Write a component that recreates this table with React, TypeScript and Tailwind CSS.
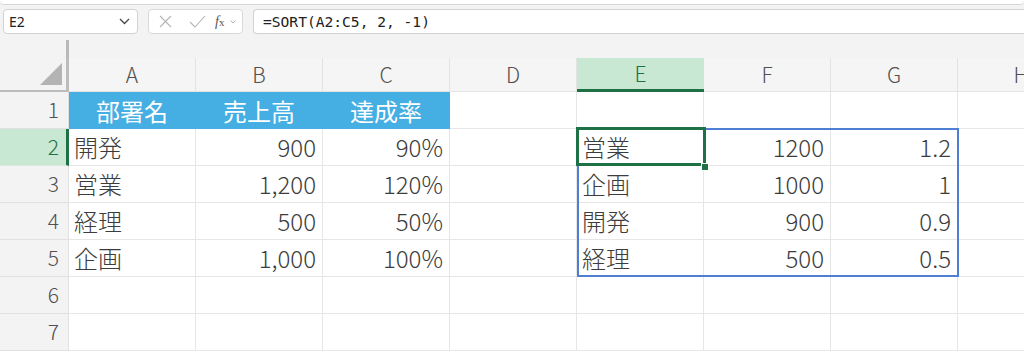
import React from "react";

const COLS = ["A", "B", "C", "D", "E", "F", "G", "H"];

type Cell = { t: string; align?: "l" | "r" | "c"; head?: boolean };

const rows: Cell[][] = [
  [
    { t: "部署名", align: "c", head: true },
    { t: "売上高", align: "c", head: true },
    { t: "達成率", align: "c", head: true },
    { t: "" }, { t: "" }, { t: "" }, { t: "" }, { t: "" },
  ],
  [
    { t: "開発" }, { t: "900", align: "r" }, { t: "90%", align: "r" }, { t: "" },
    { t: "営業" }, { t: "1200", align: "r" }, { t: "1.2", align: "r" }, { t: "" },
  ],
  [
    { t: "営業" }, { t: "1,200", align: "r" }, { t: "120%", align: "r" }, { t: "" },
    { t: "企画" }, { t: "1000", align: "r" }, { t: "1", align: "r" }, { t: "" },
  ],
  [
    { t: "経理" }, { t: "500", align: "r" }, { t: "50%", align: "r" }, { t: "" },
    { t: "開発" }, { t: "900", align: "r" }, { t: "0.9", align: "r" }, { t: "" },
  ],
  [
    { t: "企画" }, { t: "1,000", align: "r" }, { t: "100%", align: "r" }, { t: "" },
    { t: "経理" }, { t: "500", align: "r" }, { t: "0.5", align: "r" }, { t: "" },
  ],
  [{ t: "" }, { t: "" }, { t: "" }, { t: "" }, { t: "" }, { t: "" }, { t: "" }, { t: "" }],
  [{ t: "" }, { t: "" }, { t: "" }, { t: "" }, { t: "" }, { t: "" }, { t: "" }, { t: "" }],
];

const font = { fontFamily: '"Noto Sans CJK JP", "Noto Sans", sans-serif' };

export default function App() {
  return (
    <div className="w-[1024px] h-[353px] overflow-hidden bg-white relative" style={font}>
      {/* Toolbar area */}
      <div className="h-[58px] bg-[#f3f3f3] relative">
        <div className="h-[5px] bg-white border-b border-[#d6d6d6] rounded-b-[4px] mx-0" />
        <div className="flex items-center mt-[4px] h-[25px]">
          <div className="ml-[3px] w-[135px] h-[25px] bg-white border border-[#d2d2d2] rounded-[4px] flex items-center justify-between pl-[5px] pr-[7px]">
            <span className="text-[14px] text-[#222]" style={{ fontFamily: '"Noto Sans", "Liberation Sans", sans-serif' }}>E2</span>
            <svg width="11" height="7" viewBox="0 0 11 7" fill="none">
              <path d="M1 1l4.5 4.5L10 1" stroke="#444" strokeWidth="1.3" />
            </svg>
          </div>
          <div className="ml-[10px] w-[95px] h-[25px] bg-white border border-[#d9d9d9] rounded-[4px] flex items-center pl-[10px]">
            <svg width="13" height="13" viewBox="0 0 13 13" fill="none">
              <path d="M1 1l11 11M12 1L1 12" stroke="#b5b5b5" strokeWidth="1.1" />
            </svg>
            <svg className="ml-[17px]" width="17" height="13" viewBox="0 0 17 13" fill="none">
              <path d="M1 7l5 5L16 1" stroke="#b5b5b5" strokeWidth="1.1" />
            </svg>
            <span className="ml-[9px] italic text-[14px] text-[#555] leading-none" style={{ fontFamily: '"Liberation Serif", serif' }}>
              f<span className="text-[11px] not-italic">x</span>
            </span>
            <svg className="ml-[6px]" width="6" height="4" viewBox="0 0 6 4" fill="none">
              <path d="M0.5 0.5l2.5 2.5 2.5-2.5" stroke="#aaa" strokeWidth="0.9" />
            </svg>
          </div>
          <div className="ml-[10px] flex-1 h-[25px] bg-white border border-r-0 border-[#d2d2d2] rounded-l-[4px] flex items-center pl-[9px]">
            <span className="text-[14.6px] text-[#222]" style={{ fontFamily: '"DejaVu Sans Mono", monospace' }}>
              =SORT(A2:C5, 2, -1)
            </span>
          </div>
        </div>
        <div className="absolute left-[66px] top-[40px] w-[3px] h-[18px] bg-[#b9b9b9]" />
      </div>

      {/* Grid */}
      <div className="relative">
        {/* Column header row */}
        <div className="flex h-[34px]">
          <div className="w-[69px] shrink-0 bg-[#f3f3f3] border-r-[3px] border-b-[2px] border-[#bcbcbc] relative">
            <div
              className="absolute right-[4px] bottom-[5px] w-[22px] h-[22px] bg-[#b3b3b3]"
              style={{ clipPath: "polygon(100% 0, 100% 100%, 0 100%)" }}
            />
          </div>
          {COLS.map((c) => (
            <div
              key={c}
              className={
                c === "E"
                  ? "w-[127px] shrink-0 bg-[#c9e8d3] border-b-[3px] border-[#1e7145] text-[#1e7145] flex items-center justify-center text-[21px] font-light"
                  : "w-[127px] shrink-0 bg-[#f5f5f5] border-r border-b border-[#e3e3e3] text-[#505050] flex items-center justify-center text-[21px] font-light"
              }
            >
              {c}
            </div>
          ))}
        </div>

        {rows.map((r, i) => {
          const sel = i === 1;
          return (
            <div key={i} className="flex h-[37px]">
              <div
                className={
                  sel
                    ? "w-[69px] shrink-0 bg-[#c9e8d3] border-r-[3px] border-[#1e7145] border-b border-b-[#d9e8de] text-[#1e7145] flex items-center justify-end pr-[7px] text-[21px] font-light"
                    : "w-[69px] shrink-0 bg-[#f3f3f3] border-r border-b border-[#e0e0e0] text-[#505050] flex items-center justify-end pr-[9px] text-[21px] font-light"
                }
              >
                {i + 1}
              </div>
              {r.map((cell, j) => (
                <div
                  key={j}
                  className={
                    (cell.head
                      ? "bg-[#45aee2] text-white border-r border-[#45aee2] font-normal "
                      : "bg-white text-[#3c3c3c] border-r border-b border-[#e6e6e6] font-light ") +
                    "w-[127px] shrink-0 h-full flex items-center text-[24px] leading-none " +
                    (cell.align === "r"
                      ? "justify-end pr-[6px]"
                      : cell.align === "c"
                      ? "justify-center"
                      : "justify-start pl-[5px]")
                  }
                >
                  {cell.t}
                </div>
              ))}
            </div>
          );
        })}

        {/* Blue spill range border E2:G5 */}
        <div className="absolute left-[577px] top-[70px] w-[382px] h-[149px] border-2 border-[#4f7fd5] pointer-events-none" />
        {/* Active cell E2 */}
        <div className="absolute left-[576px] top-[69px] w-[130px] h-[39px] border-[3px] border-[#1e7145] pointer-events-none" />
        <div className="absolute left-[701px] top-[105px] w-[8px] h-[8px] bg-[#1e7145] border border-white pointer-events-none" />
      </div>
    </div>
  );
}
